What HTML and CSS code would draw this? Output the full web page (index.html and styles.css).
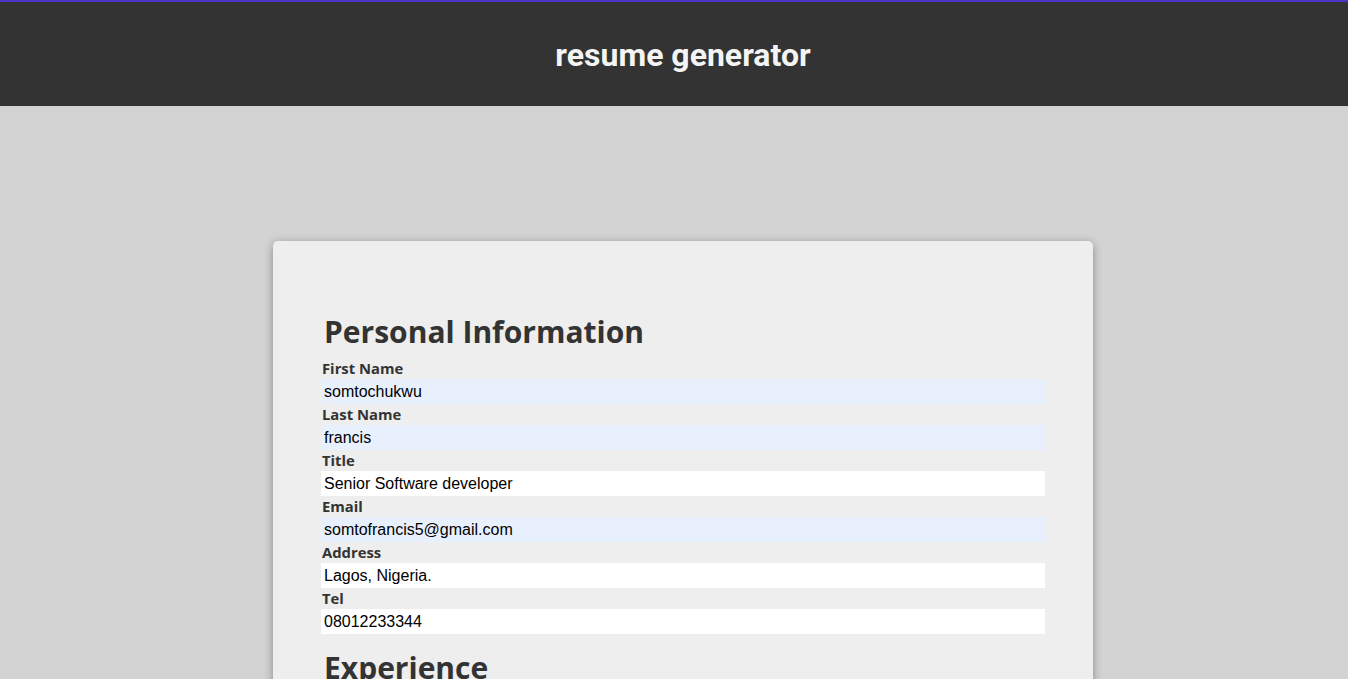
FILE: index.html
```html
<!DOCTYPE html>
<html lang="en">
<head>
<meta charset="utf-8">
<title>resume generator</title>
<link rel="stylesheet" href="styles.css">
</head>
<body>
<header class="site-header">
  <h1 class="site-title">resume generator</h1>
</header>
<main class="page">
  <section class="card">
    <h2 class="section-title">Personal Information</h2>
    <form class="fields">
      <div class="field">
        <label class="field-label" for="first">First Name</label>
        <input class="field-input autofilled" id="first" type="text" value="somtochukwu">
      </div>
      <div class="field">
        <label class="field-label" for="last">Last Name</label>
        <input class="field-input autofilled" id="last" type="text" value="francis">
      </div>
      <div class="field">
        <label class="field-label" for="title">Title</label>
        <input class="field-input" id="title" type="text" value="Senior Software developer">
      </div>
      <div class="field">
        <label class="field-label" for="email">Email</label>
        <input class="field-input autofilled" id="email" type="text" value="somtofrancis5@gmail.com">
      </div>
      <div class="field">
        <label class="field-label" for="address">Address</label>
        <input class="field-input" id="address" type="text" value="Lagos, Nigeria.">
      </div>
      <div class="field">
        <label class="field-label" for="tel">Tel</label>
        <input class="field-input" id="tel" type="text" value="08012233344">
      </div>
    </form>
    <h2 class="section-title section-gap">Experience</h2>
    <div class="spacer"></div>
  </section>
</main>
</body>
</html>
```

FILE: styles.css
```css
* { box-sizing: border-box; }

html, body {
  margin: 0;
  padding: 0;
}

body {
  background: #d3d3d3;
  font-family: "Open Sans", "Noto Sans", sans-serif;
  color: #333333;
}

.site-header {
  background: #333333;
  border-top: 2px solid #4b35c4;
  height: 106px;
  display: flex;
  align-items: center;
  justify-content: center;
  padding-left: 18px;
}

.site-title {
  margin: 0;
  font-family: Roboto, "Liberation Sans", sans-serif;
  font-weight: 700;
  font-size: 32px;
  color: #f4f4f4;
  line-height: 1;
  padding-top: 2px;
}

.page {
  display: flex;
  justify-content: center;
  padding-top: 135px;
  padding-left: 18px;
}

.card {
  width: 820px;
  background: #eeeeee;
  border-radius: 5px;
  box-shadow: 0 2px 10px rgba(0, 0, 0, 0.35);
  padding: 48px 48px 60px;
}

.section-title {
  margin: 21px 0 5px 3px;
  font-family: "Open Sans", "Noto Sans", sans-serif;
  font-weight: 700;
  font-size: 30px;
  line-height: 43px;
  color: #333333;
}

.section-gap {
  margin-top: 12px;
}

.fields {
  display: flex;
  flex-direction: column;
  margin: 0;
}

.field {
  display: flex;
  flex-direction: column;
}

.field-label {
  font-family: "Open Sans", "Noto Sans", sans-serif;
  font-weight: 700;
  font-size: 14.8px;
  line-height: 21px;
  color: #333333;
  padding-left: 1px;
}

.field-input {
  display: block;
  width: 100%;
  height: 25px;
  border: none;
  outline: none;
  margin: 0;
  padding: 0 3px;
  background: #ffffff;
  font-family: "Liberation Sans", Arial, sans-serif;
  font-size: 16px;
  color: #000000;
}

.field-input.autofilled {
  background: #e8f0fe;
}

.spacer {
  height: 200px;
}
```
